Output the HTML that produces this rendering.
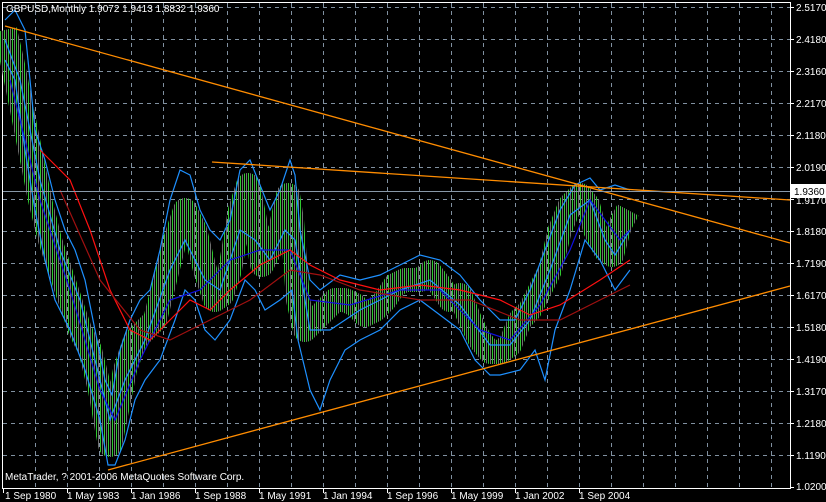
<!DOCTYPE html>
<html><head><meta charset="utf-8"><style>
body{margin:0;background:#000;width:826px;height:502px;overflow:hidden}
svg{display:block}
text{font-family:"Liberation Sans",sans-serif;font-size:10px;fill:#fff}
</style></head><body>
<svg width="826" height="502" viewBox="0 0 826 502" xmlns="http://www.w3.org/2000/svg">
<defs>
<pattern id="bars" patternUnits="userSpaceOnUse" width="4" height="8"><rect x="0" y="0" width="1" height="8" fill="#30c830"/><rect x="2" y="0" width="1" height="8" fill="#707070"/></pattern>
</defs>
<rect width="826" height="502" fill="#000"/>
<g stroke="#8090a0" stroke-width="1" stroke-dasharray="4,4" fill="none">
<path d="M3 7.5H790M3 39.5H790M3 71.5H790M3 103.5H790M3 135.5H790M3 167.5H790M3 199.5H790M3 231.5H790M3 263.5H790M3 295.5H790M3 327.5H790M3 359.5H790M3 391.5H790M3 423.5H790M3 455.5H790"/>
<path d="M35.5 3V488M67.5 3V488M99.5 3V488M131.5 3V488M163.5 3V488M195.5 3V488M227.5 3V488M259.5 3V488M291.5 3V488M323.5 3V488M355.5 3V488M387.5 3V488M419.5 3V488M451.5 3V488M483.5 3V488M515.5 3V488M547.5 3V488M579.5 3V488M611.5 3V488M643.5 3V488M675.5 3V488M707.5 3V488M739.5 3V488M771.5 3V488"/>
</g>
<path d="M2.5 2.5H790.5V488.5H2.5Z" fill="none" stroke="#fff"/>
<g stroke="#fff"><path d="M3.5 488v5M67.5 488v5M131.5 488v5M195.5 488v5M259.5 488v5M323.5 488v5M387.5 488v5M451.5 488v5M515.5 488v5M579.5 488v5"/>
<path d="M790 7.5h4M790 39.5h4M790 71.5h4M790 103.5h4M790 135.5h4M790 167.5h4M790 199.5h4M790 231.5h4M790 263.5h4M790 295.5h4M790 327.5h4M790 359.5h4M790 391.5h4M790 423.5h4M790 455.5h4M790 487.5h4"/></g>
<!-- price bars -->
<polyline fill="none" stroke="url(#bars)" stroke-width="24" stroke-linejoin="round" points="5,30 12,60 20,100 30,150 40,200 50,240 60,270 70,300 80,330 90,350 100,390 107,430 110,445 115,420 125,370 135,340 145,330 155,320 165,280 175,240 185,210 195,230 205,270 215,300 222,295 230,270 240,210 248,185 255,220 262,265 270,250 280,230 288,195 292,220 298,300 305,330 315,320 325,310 335,300 345,300 355,305 365,315 375,310 385,300 395,285 405,280 420,280 430,272 440,285 450,300 460,295 470,320 480,340 490,352 500,352 510,345 520,320 530,310 540,290 550,270 560,230 570,205 580,195 588,205 595,230 605,250 612,255 620,225 628,210"/>
<g fill="none" stroke-width="1.2">
<polyline stroke="#1e90ff" points="5,20 15,10 25,30 35,130 45,160 55,200 65,230 75,250 85,280 95,330 105,380 112,395 120,350 130,320 140,300 150,290 160,250 170,200 180,170 190,175 200,210 210,230 220,240 230,220 240,170 250,160 258,180 270,210 280,190 290,160 295,175 300,230 310,280 320,290 340,275 360,280 380,275 400,265 420,255 440,260 460,275 480,300 500,320 515,320 530,290 545,250 560,210 575,185 590,178 600,190 615,185 630,190"/>
<polyline stroke="#1e90ff" points="5,60 15,80 25,150 35,210 45,260 55,300 70,330 85,370 100,420 108,465 115,465 125,440 135,400 145,380 160,360 175,320 185,290 195,300 205,330 215,340 230,320 245,280 255,290 265,310 280,300 292,290 298,340 310,390 320,410 330,380 345,350 360,340 380,330 400,310 420,300 440,315 460,330 475,360 490,375 500,375 520,370 535,350 545,380 555,330 570,290 585,240 600,260 615,290 630,270"/>
<polyline stroke="#1e90ff" points="5,40 20,80 40,180 60,250 80,300 100,380 110,420 125,380 145,340 170,270 185,240 205,280 220,290 240,230 255,240 270,260 285,230 295,240 310,330 330,330 360,310 400,290 430,280 460,305 490,345 510,345 530,320 550,270 570,215 590,200 605,240 615,255 630,230"/>
<polyline stroke="#1010e0" points="10,80 40,200 70,290 100,390 115,420 140,360 170,300 200,290 230,260 260,250 290,250 310,300 350,305 400,290 440,290 480,330 510,340 540,305 570,250 590,200 605,220 620,240 630,230"/>
<polyline stroke="#ff1010" points="40,150 70,180 90,230 110,290 130,330 150,340 170,320 190,300 210,310 230,290 260,265 290,250 310,265 340,280 380,290 420,285 460,290 500,300 530,315 560,305 600,280 630,260"/>
<polyline stroke="#a01010" points="60,190 100,280 140,330 170,340 210,320 250,300 290,270 320,275 360,290 420,300 470,300 520,320 560,320 600,300 630,285"/>
</g>
<g stroke="#ff8c00" stroke-width="1.3">
<line x1="5" y1="26" x2="790" y2="243"/>
<line x1="212" y1="162" x2="790" y2="200"/>
<line x1="108" y1="470" x2="790" y2="286"/>
</g>
<line x1="3" y1="191.5" x2="790" y2="191.5" stroke="#8898a8"/>
<rect x="790" y="184" width="36" height="14" fill="#fff"/>
<text x="794" y="195" style="fill:#000">1.9360</text>
<text x="6" y="12">GBPUSD,Monthly 1.9072 1.9413 1.8832 1.9360</text>
<text x="5" y="480">MetaTrader, ? 2001-2006 MetaQuotes Software Corp.</text>
<g>
<text x="796" y="11">2.5170</text><text x="796" y="43">2.4180</text><text x="796" y="75">2.3160</text><text x="796" y="107">2.2170</text><text x="796" y="139">2.1180</text><text x="796" y="171">2.0190</text><text x="796" y="204">1.9170</text><text x="796" y="235">1.8180</text><text x="796" y="267">1.7190</text><text x="796" y="299">1.6170</text><text x="796" y="331">1.5180</text><text x="796" y="363">1.4190</text><text x="796" y="395">1.3170</text><text x="796" y="427">1.2180</text><text x="796" y="459">1.1190</text><text x="796" y="490">1.0200</text>
</g>
<g>
<text x="5" y="499">1 Sep 1980</text><text x="67" y="499">1 May 1983</text><text x="131" y="499">1 Jan 1986</text><text x="195" y="499">1 Sep 1988</text><text x="259" y="499">1 May 1991</text><text x="323" y="499">1 Jan 1994</text><text x="387" y="499">1 Sep 1996</text><text x="451" y="499">1 May 1999</text><text x="515" y="499">1 Jan 2002</text><text x="579" y="499">1 Sep 2004</text>
</g>
</svg>
</body></html>
